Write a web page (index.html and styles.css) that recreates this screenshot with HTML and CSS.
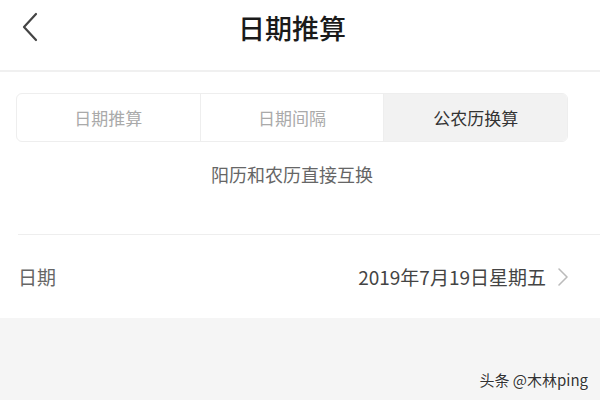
FILE: index.html
```html
<!DOCTYPE html>
<html lang="zh-CN">
<head>
  <meta charset="UTF-8">
  <meta name="viewport" content="width=device-width, initial-scale=1.0">
  <title>日期推算</title>
  <link rel="stylesheet" href="styles.css">
</head>
<body>
  <div class="header">
    <span class="back-btn">
      <svg width="18" height="30" viewBox="0 0 18 30"><path d="M15 2 L3 15 L15 28" fill="none" stroke="#444" stroke-width="2.2" stroke-linecap="round" stroke-linejoin="round"/></svg>
    </span>
    <h1>日期推算</h1>
  </div>

  <div class="content">
    <div class="tabs">
      <div class="tab">日期推算</div>
      <div class="tab">日期间隔</div>
      <div class="tab active">公农历换算</div>
    </div>
    <p class="tip">阳历和农历直接互换</p>
  </div>

  <div class="row">
    <span class="row-label">日期</span>
    <span class="row-value">2019年7月19日星期五
      <svg width="12" height="20" viewBox="0 0 12 20"><path d="M2 2 L10 10 L2 18" fill="none" stroke="#bbb" stroke-width="1.6" stroke-linecap="round" stroke-linejoin="round"/></svg>
    </span>
  </div>

  <div class="bottom"></div>

  <!-- watermark -->
  <div class="watermark">头条 @木林ping</div>
</body>
</html>
```

FILE: styles.css
```css
body {
  font-family: "Noto Sans CJK SC", "Noto Sans", sans-serif;
  margin: 0;
  padding: 0;
  width: 600px;
  height: 400px;
  background-color: #fff;
  position: relative;
  overflow: hidden;
}

.header {
  height: 70px;
  border-bottom: 2px solid #f0f0f0;
  display: flex;
  align-items: center;
  justify-content: center;
  position: relative;
}

.back-btn {
  position: absolute;
  left: 21px;
  top: 12px;
}

h1 {
  margin: 0;
  margin-top: -16px;
  margin-left: -16px;
  font-size: 27px;
  font-weight: 500;
  color: #1a1a1a;
}

.content {
  padding: 21px 32px 0 16px;
}

.tabs {
  display: flex;
  height: 47px;
  border: 1px solid #eee;
  border-radius: 6px;
  overflow: hidden;
}

.tab {
  flex: 1;
  display: flex;
  align-items: center;
  justify-content: center;
  font-size: 17px;
  color: #aaa;
  border-left: 1px solid #eee;
}

.tab:first-child {
  border-left: none;
}

.tab.active {
  background-color: #f2f2f2;
  color: #333;
}

.tip {
  margin: 20px 0 0;
  padding-bottom: 48px;
  text-align: center;
  font-size: 18px;
  line-height: 24px;
  color: #666;
}

.row {
  margin-left: 18px;
  height: 83px;
  border-top: 1px solid #eee;
  display: flex;
  align-items: center;
  justify-content: space-between;
  padding-right: 31px;
}

.row-label {
  font-size: 19px;
  color: #666;
}

.row-value {
  display: flex;
  align-items: center;
  gap: 11px;
  font-size: 19px;
  color: #444;
}

.bottom {
  height: 100px;
  background-color: #f5f5f5;
}

.watermark {
  position: absolute;
  right: 12px;
  bottom: 10px;
  font-size: 15px;
  color: #333;
  text-shadow: 0 0 2px #fff, 0 0 2px #fff;
}
```
